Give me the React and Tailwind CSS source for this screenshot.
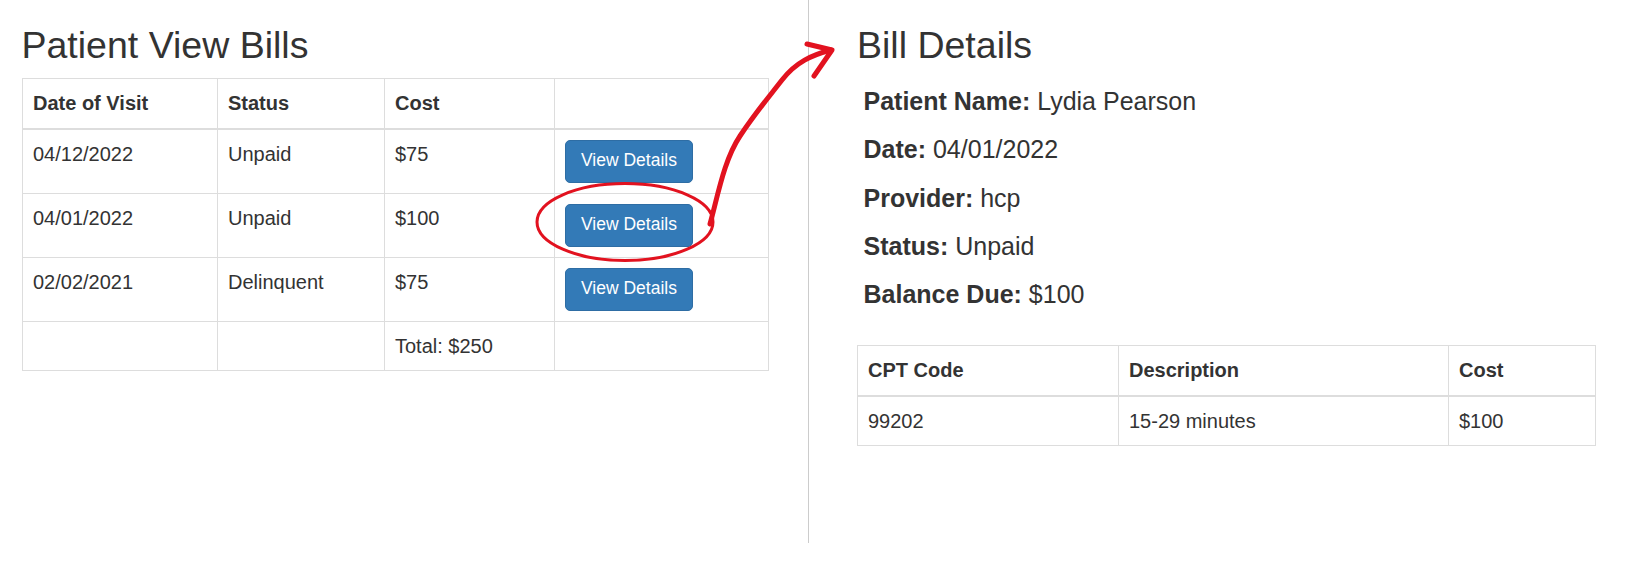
const bills = [
  { date: "04/12/2022", status: "Unpaid", cost: "$75" },
  { date: "04/01/2022", status: "Unpaid", cost: "$100" },
  { date: "02/02/2021", status: "Delinquent", cost: "$75" },
];

const details = [
  ["Patient Name:", "Lydia Pearson"],
  ["Date:", "04/01/2022"],
  ["Provider:", "hcp"],
  ["Status:", "Unpaid"],
  ["Balance Due:", "$100"],
];

const cell = "border border-[#ddd] px-[10px] py-[10px] align-top text-left leading-[28.6px]";
const head = `${cell} border-b-2 font-bold`;

function ViewButton() {
  return (
    <button
      type="button"
      className="block rounded-[5px] border border-[#2e6da4] bg-[#337ab7] px-[15px] pt-[7px] pb-[9px] text-[17.5px] leading-[25px] text-white"
    >
      View Details
    </button>
  );
}

export default function App() {
  return (
    <div className="relative flex h-[565px] w-[1639px] bg-white font-['Liberation_Sans',Arial,sans-serif] text-[#333]">
      <div className="h-[543px] w-[809px] shrink-0 border-r border-[#ccc] pl-[20px]">
        <h2 className="mt-[25px] mb-[12px] ml-[1.5px] text-[37.5px] leading-[41px] font-normal">Patient View Bills</h2>
        <table className="ml-[2px] w-[746px] table-fixed border-collapse text-[20px]">
          <colgroup>
            <col className="w-[195px]" />
            <col className="w-[167px]" />
            <col className="w-[170px]" />
            <col className="w-[214px]" />
          </colgroup>
          <thead>
            <tr>
              <th className={head}>Date of Visit</th>
              <th className={head}>Status</th>
              <th className={head}>Cost</th>
              <th className={head}></th>
            </tr>
          </thead>
          <tbody>
            {bills.map((bill) => (
              <tr key={bill.date}>
                <td className={cell}>{bill.date}</td>
                <td className={cell}>{bill.status}</td>
                <td className={cell}>{bill.cost}</td>
                <td className={cell}>
                  <ViewButton />
                </td>
              </tr>
            ))}
            <tr>
              <td className={cell}></td>
              <td className={cell}></td>
              <td className={cell}>Total: $250</td>
              <td className={cell}></td>
            </tr>
          </tbody>
        </table>
      </div>

      <div className="flex-1 pl-[47px]">
        <h2 className="mt-[25px] ml-[1px] text-[37.5px] leading-[41px] font-normal">Bill Details</h2>
        <div className="mt-[11px] ml-[7.5px] text-[25px]">
          {details.map(([label, value]) => (
            <p key={label} className="leading-[48.3px]">
              <strong className="font-bold">{label}</strong> {value}
            </p>
          ))}
        </div>
        <table className="mt-[26.5px] ml-[1px] w-[738px] table-fixed border-collapse text-[20px]">
          <colgroup>
            <col className="w-[261px]" />
            <col className="w-[330px]" />
            <col className="w-[147px]" />
          </colgroup>
          <thead>
            <tr>
              <th className={head}>CPT Code</th>
              <th className={head}>Description</th>
              <th className={head}>Cost</th>
            </tr>
          </thead>
          <tbody>
            <tr>
              <td className={cell}>99202</td>
              <td className={cell}>15-29 minutes</td>
              <td className={cell}>$100</td>
            </tr>
          </tbody>
        </table>
      </div>

      {/* hand-drawn annotation */}
      <svg
        className="pointer-events-none absolute top-0 left-0"
        width="1639"
        height="565"
        viewBox="0 0 1639 565"
        fill="none"
      >
        <ellipse cx="625" cy="222" rx="88" ry="38.5" stroke="#e2121f" strokeWidth="3" />
        <path
          d="M710 224 C718 195, 724 160, 740 136 S768 98, 782 80 S812 55, 831 50"
          stroke="#e2121f"
          strokeWidth="5"
          strokeLinecap="round"
          strokeLinejoin="round"
        />
        <path
          d="M807 44 L832 50 L814 76"
          stroke="#e2121f"
          strokeWidth="5"
          strokeLinecap="round"
          strokeLinejoin="round"
        />
      </svg>
    </div>
  );
}
